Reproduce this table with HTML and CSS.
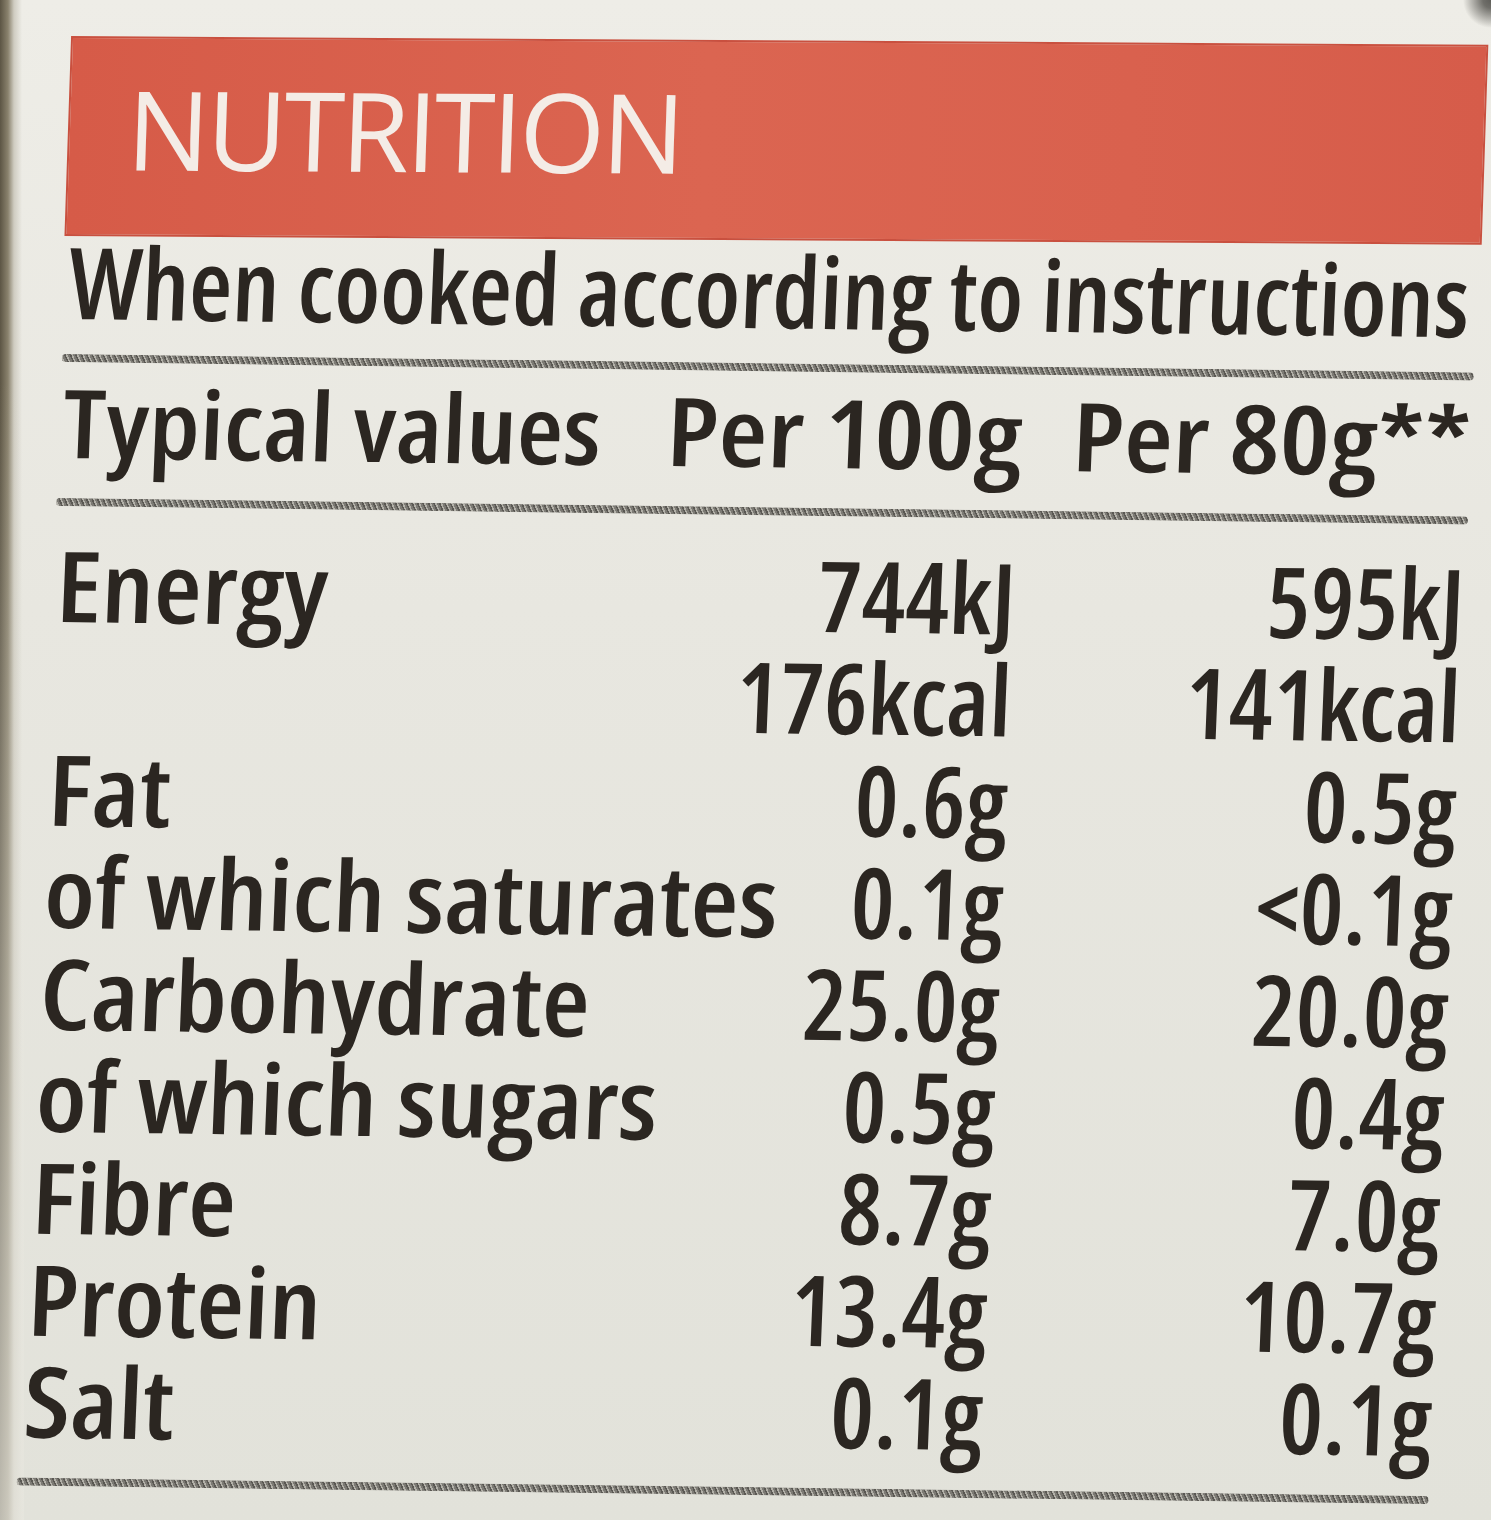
FILE: index.html
```html
<!DOCTYPE html>
<html lang="en">
<head>
<meta charset="utf-8">
<title>Nutrition</title>
<link rel="stylesheet" href="styles.css">
</head>
<body>
<main class="label">
  <div class="banner"><h1 class="banner-title">NUTRITION</h1></div>
  <p class="note">When cooked according to instructions</p>
  <div class="rule"></div>
  <div class="table table-head">
    <span class="name">Typical values</span>
    <span class="val">Per 100g</span>
    <span class="val">Per 80g**</span>
  </div>
  <div class="rule"></div>
  <div class="table table-body">
    <span class="name">Energy</span><span class="val">744kJ</span><span class="val">595kJ</span>
    <span class="name"></span><span class="val">176kcal</span><span class="val">141kcal</span>
    <span class="name">Fat</span><span class="val">0.6g</span><span class="val">0.5g</span>
    <span class="name">of which saturates</span><span class="val">0.1g</span><span class="val">&lt;0.1g</span>
    <span class="name">Carbohydrate</span><span class="val">25.0g</span><span class="val">20.0g</span>
    <span class="name">of which sugars</span><span class="val">0.5g</span><span class="val">0.4g</span>
    <span class="name">Fibre</span><span class="val">8.7g</span><span class="val">7.0g</span>
    <span class="name">Protein</span><span class="val">13.4g</span><span class="val">10.7g</span>
    <span class="name">Salt</span><span class="val">0.1g</span><span class="val">0.1g</span>
  </div>
  <div class="rule"></div>
</main>
</body>
</html>
```
FILE: styles.css
```css
html, body {
  margin: 0;
  height: 1520px;
  overflow: hidden;
}

body {
  background-color: #e7e6de;
  background-image:
    radial-gradient(circle at 100% 0, #5f5e5a 0, #6f6e69 8px, rgba(231,230,222,0) 28px),
    linear-gradient(to bottom, rgba(231,230,222,0) 25%, rgba(231,230,222,0.7) 100%),
    linear-gradient(to right, #5c5544 0, #8a826d 8px, #cfccc1 14px, rgba(231,230,222,0) 22px),
    linear-gradient(to bottom, #eeede7 0, #e8e7e0 40%, #e2e2da 100%);
  background-size: 100% 100%, 24px 100%, 24px 100%, 100% 100%;
  background-repeat: no-repeat;
  font-family: "Open Sans", "Liberation Sans", sans-serif;
  color: #2b2621;
}

.label {
  box-sizing: border-box;
  width: 1491px;
  height: 1520px;
  padding: 40px 33px 0 46px;
  transform-origin: 745px 760px;
  transform: rotate(0.75deg) skewX(-1.55deg);
}

.banner {
  box-sizing: border-box;
  height: 200px;
  margin: 0 -2px 0 -3px;
  padding: 33px 0 0 57px;
  background: linear-gradient(90deg, #d65b48 0%, #db6551 45%, #d9614e 75%, #d65c4a 100%);
  border: 2px solid #c9503f;
  transform: rotate(-0.4deg);
}

.banner-title {
  margin: 0;
  font-size: 110px;
  line-height: 112px;
  font-weight: 500;
  font-stretch: 100%;
  letter-spacing: -3px;
  color: #f4ece6;
}

.note {
  margin: 0;
  padding-left: 4px;
  font-size: 99px;
  line-height: 100px;
  font-weight: 650;
  font-stretch: 75%;
  white-space: nowrap;
}

.rule {
  height: 8px;
  margin-top: 23px;
  border-radius: 4px;
  background-color: #8e8c86;
  background-image: repeating-linear-gradient(65deg, #5a5853 0 1.5px, #b3b1a9 1.5px 3px, #7c7a74 3px 5px);
}

.table {
  display: grid;
  grid-template-columns: 1fr 250px 449px;
  padding-left: 4px;
  white-space: nowrap;
  font-weight: 650;
  font-stretch: 75%;
}

.table-head {
  margin-top: 8px;
  font-size: 95px;
  line-height: 102px;
}

.table-head + .rule {
  margin-top: 26px;
}

.table-body {
  margin-top: 27px;
  font-size: 98px;
  line-height: 102px;
}

.table-body + .rule {
  margin-top: 27px;
}

.name {
  min-width: 0;
  transform: scaleX(1.12);
  transform-origin: 0 50%;
}

.val {
  justify-self: end;
}

.table-head .val {
  transform: scaleX(1.18);
  transform-origin: 100% 50%;
}
```
